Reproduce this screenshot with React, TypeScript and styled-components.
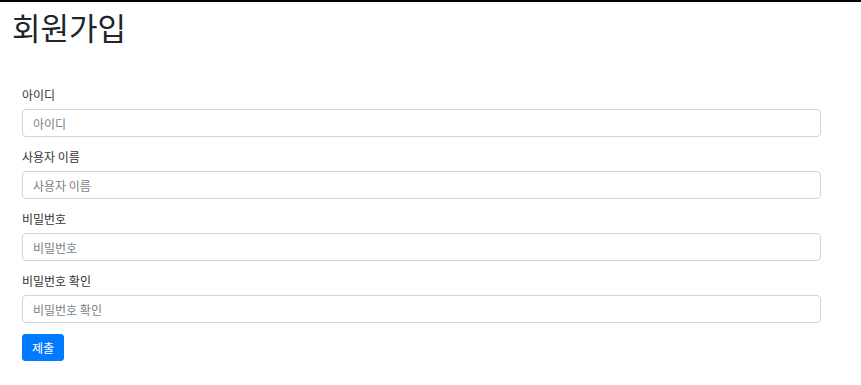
import React from "react";
import styled, { createGlobalStyle } from "styled-components";

const Global = createGlobalStyle`
  html, body { margin: 0; padding: 0; background: #fff; }
  body {
    font-family: "Noto Sans CJK KR", "Noto Sans", sans-serif;
    color: #212529;
    border-top: 2px solid #000;
  }
  * { box-sizing: border-box; }
`;

const Page = styled.div`
  display: flex;
  flex-direction: column;
  padding: 0 40px 0 12px;
`;

const Title = styled.h1`
  margin: 6px 0 0 0;
  font-size: 31px;
  font-weight: 400;
  line-height: 1.2;
  color: #212529;
`;

const Form = styled.form`
  display: flex;
  flex-direction: column;
  margin-top: 41px;
  padding-left: 10px;
`;

const Group = styled.div`
  display: flex;
  flex-direction: column;
  gap: 5px;
  margin-bottom: 11px;
`;

const Label = styled.label`
  font-size: 12px;
  line-height: 18px;
  color: #333;
`;

const Input = styled.input`
  height: 28px;
  width: 100%;
  padding: 0 10px;
  font-size: 12px;
  font-family: inherit;
  border: 1px solid #ced4da;
  border-radius: 4px;
  color: #495057;
  outline: none;
  &::placeholder { color: #7a7f85; }
`;

const Button = styled.button`
  align-self: flex-start;
  height: 27px;
  padding: 0 9px;
  font-size: 12px;
  font-family: inherit;
  color: #fff;
  background: #007bff;
  border: 1px solid #007bff;
  border-radius: 3px;
`;

const fields = [
  { label: "아이디", type: "text" },
  { label: "사용자 이름", type: "text" },
  { label: "비밀번호", type: "password" },
  { label: "비밀번호 확인", type: "password" },
];

export default function App() {
  return (
    <>
      <Global />
      <Page>
        <Title>회원가입</Title>
        <Form onSubmit={(e) => e.preventDefault()}>
          {fields.map((f) => (
            <Group key={f.label}>
              <Label>{f.label}</Label>
              <Input type={f.type} placeholder={f.label} />
            </Group>
          ))}
          <Button type="submit">제출</Button>
        </Form>
      </Page>
    </>
  );
}
